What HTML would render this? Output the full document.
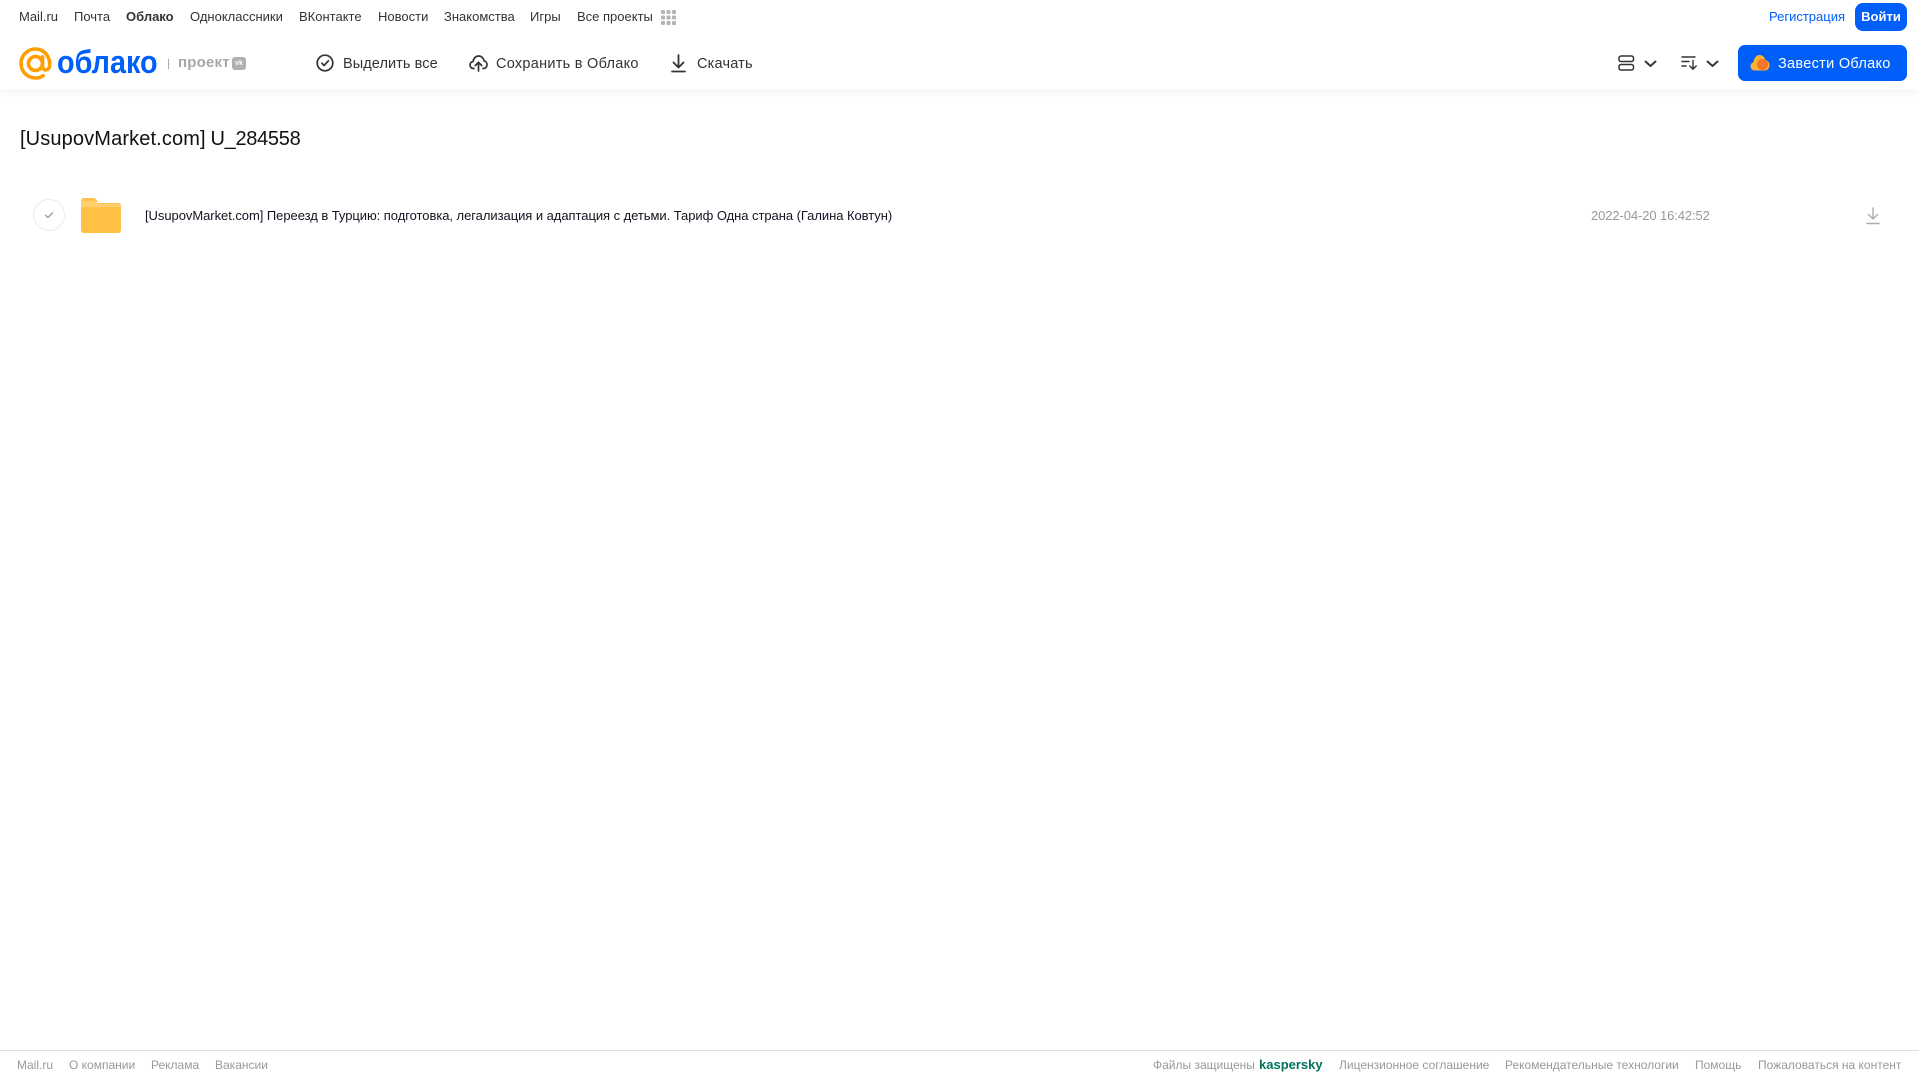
<!DOCTYPE html>
<html lang="ru"><head><meta charset="utf-8"><title>Облако</title>
<style>
html,body{margin:0;padding:0;background:#fff;}
body{width:1919px;height:1079px;overflow:hidden;position:relative;font-family:"Liberation Sans",sans-serif;}
.t{position:absolute;white-space:nowrap;line-height:20px;height:20px;}
.n{top:7px;font-size:13px;color:#333;}
.b{top:54px;font-size:14.5px;color:#333;letter-spacing:.13px;}
.f{top:1055px;font-size:12px;color:#999;}
svg{position:absolute;overflow:visible;}
</style></head><body>
<div style="position:absolute;left:0;top:0;width:1919px;height:90px;background:#fff;box-shadow:0 2px 8px rgba(0,0,0,.06);"></div>

<span class="t n" style="left:19px">Mail.ru</span>
<span class="t n" style="left:74px">Почта</span>
<span class="t n" style="left:126px;font-weight:bold">Облако</span>
<span class="t n" style="left:190px">Одноклассники</span>
<span class="t n" style="left:299px">ВКонтакте</span>
<span class="t n" style="left:378px">Новости</span>
<span class="t n" style="left:444px">Знакомства</span>
<span class="t n" style="left:530px">Игры</span>
<span class="t n" style="left:577px">Все проекты</span>
<svg style="left:661px;top:10px" width="15" height="15" fill="#b4b4b4"><rect width="4" height="4" rx="1"/><rect x="5.500" width="4" height="4" rx="1"/><rect x="11" width="4" height="4" rx="1"/><rect y="5.500" width="4" height="4" rx="1"/><rect x="5.500" y="5.500" width="4" height="4" rx="1"/><rect x="11" y="5.500" width="4" height="4" rx="1"/><rect y="11" width="4" height="4" rx="1"/><rect x="5.500" y="11" width="4" height="4" rx="1"/><rect x="11" y="11" width="4" height="4" rx="1"/></svg>

<span class="t n" style="left:1769px;color:#005ff9">Регистрация</span>
<div style="position:absolute;left:1855px;top:3px;width:52px;height:28px;background:#005ff9;border-radius:8px;color:#fff;font-size:13px;font-weight:bold;line-height:27px;text-align:center;">Войти</div>

<!-- logo -->
<svg style="left:19px;top:47px" width="33" height="33" viewBox="0 0 33 33" fill="none"><circle cx="16.500" cy="16.500" r="7" stroke="#ff9e00" stroke-width="3.600"/><path d="M23.500 9.800v9.500c0 5 6.800 5 7.200-1 .6-8.600-5.600-16.300-14.200-16.300C8.500 2 2 8.500 2 16.500S8.500 31 16.500 31c3 0 5.500-.8 7.700-2.300" stroke="#ff9e00" stroke-width="3.600" stroke-linecap="round"/></svg>
<span class="t" style="left:57px;top:46px;height:32px;line-height:32px;font-size:32px;font-weight:bold;color:#005ff9;transform:scaleX(.9);transform-origin:left center;">облако</span>
<div style="position:absolute;left:168px;top:59px;width:1px;height:10px;background:#aaa;"></div>
<span class="t" style="left:178px;top:53px;font-size:15px;color:#a8a8a8;letter-spacing:.2px;font-weight:bold;">проект</span>
<div style="position:absolute;left:232px;top:57px;width:14px;height:13px;background:#b0b0b0;border-radius:3px;color:#fff;font-size:7px;font-weight:bold;line-height:13px;text-align:center;">vk</div>

<!-- toolbar -->
<svg style="left:316px;top:54px" width="18" height="18" fill="none" stroke="#333" stroke-width="1.700"><circle cx="9" cy="9" r="7.800"/><path d="M5.800 9.200l2.300 2.300 4.300-4.700" stroke-linecap="round" stroke-linejoin="round"/></svg>
<span class="t b" style="left:343px;letter-spacing:.08px">Выделить все</span>
<svg style="left:469px;top:54px" width="19" height="18" fill="none" stroke="#333" stroke-width="1.700" stroke-linecap="round" stroke-linejoin="round"><path d="M5 14.500H4.500C2.500 14.500 1 13 1 11c0-1.800 1.300-3.200 3-3.500C4.500 4.200 6.800 2 9.500 2c2.800 0 5 2 5.500 4.800 1.700.3 3 1.900 3 3.900 0 2.100-1.500 3.800-3.500 3.800H14"/><path d="M9.500 17V9M6.300 11.500l3.200-3.200 3.200 3.200"/></svg>
<span class="t b" style="left:496px;letter-spacing:.27px">Сохранить в Облако</span>
<svg style="left:671px;top:54px" width="15" height="19" fill="none" stroke="#333" stroke-width="1.800" stroke-linecap="round" stroke-linejoin="round"><path d="M7.500 1v12M2.500 8.500l5 5 5-5"/><path d="M1 17.500h13"/></svg>
<span class="t b" style="left:697px;letter-spacing:.2px">Скачать</span>

<svg style="left:1618px;top:55px" width="17" height="16" fill="none" stroke="#333" stroke-width="1.500"><rect x="1" y="1" width="14.500" height="5.500" rx="2"/><rect x="1" y="9.500" width="14.500" height="5.500" rx="2"/></svg>
<svg style="left:1644px;top:60px" width="13" height="8" fill="none" stroke="#333" stroke-width="1.900" stroke-linecap="round" stroke-linejoin="round"><path d="M1.500 1.500L6.500 6l5-4.500"/></svg>
<svg style="left:1681px;top:55px" width="17" height="16" fill="none" stroke="#333" stroke-width="1.400" stroke-linecap="round" stroke-linejoin="round"><path d="M1 2h13M1 6.500h7M1 11h4"/><path d="M12 5.500V14M8.800 11l3.200 3.200 3.200-3.200"/></svg>
<svg style="left:1706px;top:60px" width="13" height="8" fill="none" stroke="#333" stroke-width="1.900" stroke-linecap="round" stroke-linejoin="round"><path d="M1.500 1.500L6.500 6l5-4.500"/></svg>

<div style="position:absolute;left:1738px;top:45px;width:169px;height:36px;background:#005ff9;border-radius:7px;"></div>
<svg style="left:1750px;top:54px" width="20" height="18"><path d="M4.500 16.500C2 16.500 .5 14.500.5 12.300c0-2 1.300-3.600 3-4C4 4 6.500 1 9.500 1c3 0 5.200 2.200 5.700 5 2.400.3 4.300 2.500 4.300 5.200 0 3-2.100 5.300-4.700 5.300z" fill="#ffb133"/><circle cx="12.500" cy="10.500" r="5.500" fill="#f5742a"/></svg>
<span class="t b" style="left:1778px;color:#fff;letter-spacing:.3px">Завести Облако</span>

<span class="t" style="left:20px;top:126px;height:26px;line-height:26px;font-size:20px;color:#111;letter-spacing:.13px;">[UsupovMarket.com]</span>
<span class="t" style="left:210.500px;top:126px;height:26px;line-height:26px;font-size:20px;color:#111;letter-spacing:-.3px;">U_284558</span>

<!-- row -->
<svg style="left:33px;top:199px" width="32" height="32" fill="none"><circle cx="16" cy="16" r="15.500" stroke="#ebebeb"/><path d="M12.500 16.200l2.500 2.400 4.500-4.800" stroke="#999" stroke-width="1.300" stroke-linecap="round" stroke-linejoin="round"/></svg>
<svg style="left:81px;top:198px" width="40" height="35"><path d="M0 3a3 3 0 0 1 3-3h9c2 0 3 1 4 2.500L17 4H0z" fill="#ffc24d"/><path d="M0 5h37a3 3 0 0 1 3 3v24a3 3 0 0 1-3 3H3a3 3 0 0 1-3-3z" fill="#ffc043"/><path d="M0 3h14l3 2.800H37a3 3 0 0 1 3 3V9H0z" fill="#ffcf70"/></svg>
<span class="t" style="left:145px;top:206px;font-size:13px;letter-spacing:-.05px;color:#1a1020;">[UsupovMarket.com] Переезд в Турцию: подготовка, легализация и адаптация с детьми. Тариф Одна страна (Галина Ковтун)</span>
<span class="t" style="left:1591px;top:206px;font-size:13px;letter-spacing:-.1px;color:#999;">2022-04-20 16:42:52</span>
<svg style="left:1866px;top:207px" width="14" height="18" fill="none" stroke="#aaa" stroke-width="1.400" stroke-linecap="round" stroke-linejoin="round"><path d="M7 1v11M2.500 7.500L7 12l4.500-4.500"/><path d="M1 16.500h12"/></svg>

<!-- footer -->
<div style="position:absolute;left:0;top:1050px;width:1919px;height:1px;background:#ddd;"></div>
<span class="t f" style="left:17px">Mail.ru</span>
<span class="t f" style="left:69px">О компании</span>
<span class="t f" style="left:151px">Реклама</span>
<span class="t f" style="left:215px">Вакансии</span>
<span class="t f" style="left:1153px">Файлы защищены</span>
<span class="t f" style="left:1259px;font-size:13px;font-weight:bold;color:#00735c;">kaspersky</span>
<span class="t f" style="left:1339px">Лицензионное соглашение</span>
<span class="t f" style="left:1505px">Рекомендательные технологии</span>
<span class="t f" style="left:1695px">Помощь</span>
<span class="t f" style="left:1758px">Пожаловаться на контент</span>
</body></html>
